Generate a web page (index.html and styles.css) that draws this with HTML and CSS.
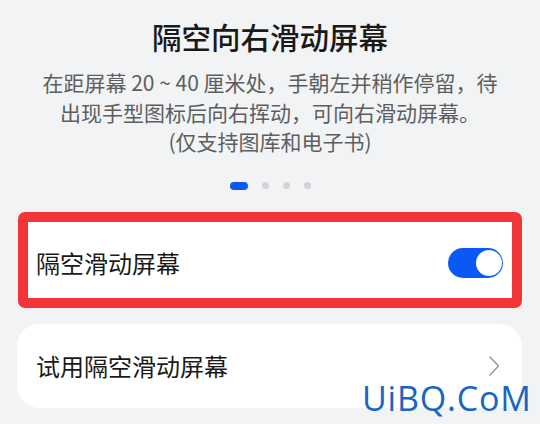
FILE: index.html
```html
<!DOCTYPE html>
<html lang="zh-CN">
<head>
<meta charset="utf-8">
<link rel="stylesheet" href="styles.css">
</head>
<body>
<div class="page">
  <h1 class="title">隔空向右滑动屏幕</h1>
  <p class="desc">在距屏幕 20 ~ 40 厘米处，手朝左并稍作停留，待<br>出现手型图标后向右挥动，可向右滑动屏幕。<br>(仅支持图库和电子书)</p>
  <div class="dots">
    <span class="dot active"></span>
    <span class="dot"></span>
    <span class="dot"></span>
    <span class="dot"></span>
  </div>
  <div class="card highlighted">
    <span class="label">隔空滑动屏幕</span>
    <span class="switch"><span class="knob"></span></span>
  </div>
  <div class="card link">
    <span class="label">试用隔空滑动屏幕</span>
    <svg class="chevron" width="12" height="20" viewBox="0 0 12 20"><polyline points="2,1 10.5,10 2,19" fill="none" stroke="#9c9c9c" stroke-width="1.6" stroke-linecap="round" stroke-linejoin="round"/></svg>
  </div>
  <div class="watermark">UiBQ.CoM</div>
</div>
</body>
</html>
```
FILE: styles.css
```css
html, body {
  margin: 0;
  padding: 0;
  background: #f1f3f5;
}
body {
  width: 540px;
  height: 424px;
  overflow: hidden;
  font-family: "Noto Sans CJK SC", "Noto Sans", sans-serif;
}
.page {
  position: relative;
  height: 424px;
  display: flex;
  flex-direction: column;
  align-items: stretch;
}
.title {
  margin: 18px 0 0;
  font-size: 29.5px;
  line-height: 36px;
  font-weight: 500;
  color: #191919;
  text-align: center;
}
.desc {
  margin: 14px 0 0;
  font-size: 21px;
  line-height: 29.5px;
  color: #5e5e5e;
  text-align: center;
}
.dots {
  margin-top: 25px;
  height: 8px;
  display: flex;
  justify-content: center;
  align-items: center;
  gap: 14px;
}
.dot {
  width: 7px;
  height: 7px;
  border-radius: 50%;
  background: #d3d4d6;
}
.dot.active {
  width: 18px;
  height: 8px;
  border-radius: 4px;
  background: #0a59f7;
}
.card {
  margin: 0 18px;
  background: #ffffff;
  display: flex;
  align-items: center;
  justify-content: space-between;
  box-sizing: border-box;
}
.highlighted {
  margin-top: 22px;
  height: 96px;
  border: 10px solid #f23638;
  border-radius: 7px;
  padding: 16px 9px 9px 8px;
}
.link {
  margin-top: 16px;
  margin-left: 17px;
  height: 84px;
  border-radius: 22px;
  padding: 0 22px 0 19px;
}
.label {
  font-size: 24px;
  line-height: 30px;
  color: #1a1a1a;
}
.switch {
  width: 55px;
  height: 30px;
  border-radius: 15px;
  background: #0a59f7;
  display: flex;
  align-items: center;
  justify-content: flex-end;
  padding-right: 1px;
  box-sizing: border-box;
}
.knob {
  width: 26px;
  height: 26px;
  border-radius: 50%;
  background: #ffffff;
  box-sizing: border-box;
}
.chevron {
  display: block;
}
.watermark {
  position: absolute;
  left: 362px;
  top: 376px;
  font-family: "Open Sans", sans-serif;
  font-size: 34px;
  line-height: 44px;
  color: #1766c2;
  letter-spacing: 0.8px;
}
```
